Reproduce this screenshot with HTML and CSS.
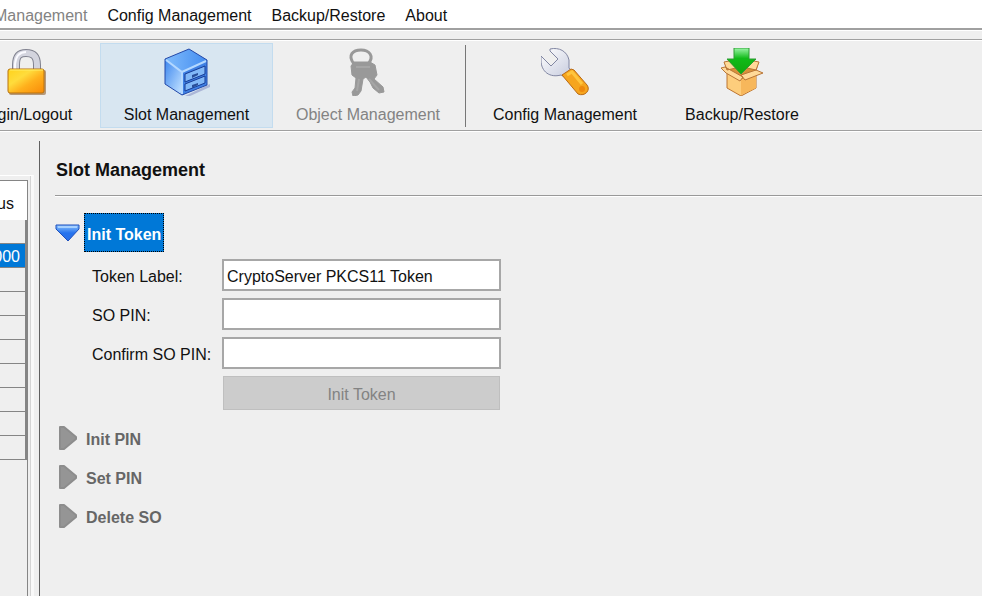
FILE: index.html
```html
<!DOCTYPE html>
<html lang="en">
  <head>
    <meta charset="UTF-8" />
    <meta name="viewport" content="width=device-width, initial-scale=1.0" />
    <title>Slot Management</title>
    <link rel="stylesheet" href="styles.css" />
  </head>
  <body>
    <nav class="menubar">
      <button class="menu" disabled>Management</button>
      <button class="menu">Config Management</button>
      <button class="menu">Backup/Restore</button>
      <button class="menu">About</button>
    </nav>

    <div class="toolbar">
      <button class="tool tool-login">
        <svg width="48" height="48" viewBox="0 0 48 48">
          <defs>
            <linearGradient id="gold" x1="0" y1="0" x2="1" y2="1">
              <stop offset="0" stop-color="#ffd21a" />
              <stop offset="0.35" stop-color="#ffdc3c" />
              <stop offset="0.6" stop-color="#ffb01c" />
              <stop offset="1" stop-color="#f98a08" />
            </linearGradient>
          </defs>
          <path d="M14 23V17C14 7 18 5 24 5S35 7 35 17V23" fill="none" stroke="#80828f" stroke-width="8" />
          <path d="M14 23V17C14 7 18 5 24 5S35 7 35 17V23" fill="none" stroke="#d3d4de" stroke-width="6" />
          <path d="M13 22V16C14 7 18 4 24 4" fill="none" stroke="#fafaff" stroke-width="2" />
          <rect x="7" y="22" width="37" height="25" rx="2" fill="#8f5f2b" opacity="0.6" />
          <rect x="6" y="21" width="36" height="24" rx="2" fill="url(#gold)" stroke="#b8730f" />
          <path d="M8 22H41" stroke="#fff06a" />
        </svg>
        <span>Login/Logout</span>
      </button>
      <button class="tool tool-slot active">
        <svg width="48" height="48" viewBox="0 0 48 48">
          <defs>
            <linearGradient id="side" x1="0" y1="0" x2="1" y2="1">
              <stop offset="0" stop-color="#3c86ee" />
              <stop offset="0.9" stop-color="#b9dcff" />
              <stop offset="1" stop-color="#5c9cf4" />
            </linearGradient>
            <linearGradient id="lid" x1="0" y1="0" x2="1" y2="0">
              <stop offset="0" stop-color="#80bcfc" />
              <stop offset="1" stop-color="#438cf0" />
            </linearGradient>
          </defs>
          <path d="M22 48L47 36V39L27 48Z" fill="#7d86bd" opacity="0.5" />
          <path d="M2 11L26 1L44 12L19 24Z" fill="url(#lid)" />
          <path d="M2 11L19 24V47L2 36Z" fill="url(#side)" />
          <path d="M19 24L44 12V37L19 47Z" fill="#3f80e3" />
          <path d="M2 11L26 1L44 12V37L19 47L2 36Z" fill="none" stroke="#2348a8" stroke-width="1" stroke-linejoin="round" />
          <path d="M3 12L19 24L43 13M19 24V46" fill="none" stroke="#b4d8ff" stroke-width="2" />
          <path d="M22 26L42 18V26L22 34ZM22 36L42 28V35L22 43Z" fill="#82b8f7" stroke="#173b95" stroke-width="1" />
          <path d="M29 27L35 25V27L29 30ZM29 37L35 35V37L29 40Z" fill="#2a4f99" />
        </svg>
        <span>Slot Management</span>
      </button>
      <button class="tool tool-object" disabled>
        <svg width="48" height="48" viewBox="0 0 48 48">
          <path d="M10 16C3 7 9 2 17 2S31 8 24 16" fill="none" stroke="#999" stroke-width="3" />
          <path d="M7 18L10 14H26L31 17L33 27L30 31L39 39L40 44L35 45L29 40L26 34L22 29L19 31L17 43L14 47L9 48L8 44L11 40L12 30L8 27Z" fill="#999" stroke="#999" stroke-linejoin="round" />
          <path d="M12 19H26M15 31L13 43M25 31L35 42" fill="none" stroke="#a6a6a6" stroke-width="2" />
        </svg>
        <span>Object Management</span>
      </button>
      <div class="separator"></div>
      <button class="tool tool-config">
        <svg width="48" height="48" viewBox="0 0 48 48">
          <defs>
            <linearGradient id="steel" x1="0" y1="0" x2="1" y2="1">
              <stop offset="0" stop-color="#fff" />
              <stop offset="1" stop-color="#c3c8dc" />
            </linearGradient>
          </defs>
          <path d="M9 1C18-1 26 3 28 12L28 20L32 25L26 30L20 27C9 30 0 24 0 12V8L10 18L17 11L9 3Z" fill="url(#steel)" stroke="#8186a2" stroke-width="1" stroke-linejoin="round" />
          <path d="M21 27L30 21L33 22L46 37C50 42 44 49 37 46Z" fill="#f6a51e" stroke="#b96a15" stroke-width="1" />
          <path d="M26 27L31 24L41 36" fill="none" stroke="#ffc53d" stroke-width="3" />
          <circle cx="41" cy="41" r="3" fill="#ee890e" />
        </svg>
        <span>Config Management</span>
      </button>
      <button class="tool tool-backup">
        <svg width="48" height="48" viewBox="0 0 48 48">
          <defs>
            <linearGradient id="arrow" x1="0" y1="0" x2="0" y2="1">
              <stop offset="0" stop-color="#9cf5a8" />
              <stop offset="0.4" stop-color="#10bb18" />
              <stop offset="1" stop-color="#12a60e" />
            </linearGradient>
          </defs>
          <path d="M9 24L23 31L38 24V40L23 48L9 40Z" fill="#fdcd7c" stroke="#bc7430" stroke-width="1" />
          <path d="M23 32L38 25V40L23 47Z" fill="#f7b75b" />
          <path d="M7 15L23 9L40 15L38 23L23 30L9 24Z" fill="#d9923b" stroke="#bc7430" stroke-width="1" />
          <path d="M7 19L3 20L8 25L22 33L25 29L7 19ZM38 22L45 25L27 32L23 27ZM6 14L11 13L18 20L9 22ZM41 14L36 13L29 20L38 22Z" fill="#ffd998" stroke="#b87537" stroke-width="1" stroke-linejoin="round" />
          <path d="M16 0H31V11H38L23 26L9 11H16Z" fill="url(#arrow)" stroke="#2c9d32" stroke-width="1" />
        </svg>
        <span>Backup/Restore</span>
      </button>
    </div>

    <main class="content">
      <section class="slots">
        <div class="scroll">
          <table>
            <thead>
              <tr><th>Status</th></tr>
            </thead>
            <tbody>
              <tr><td></td></tr>
              <tr class="selected"><td>0000</td></tr>
              <tr><td></td></tr>
              <tr><td></td></tr>
              <tr><td></td></tr>
              <tr><td></td></tr>
              <tr><td></td></tr>
              <tr><td></td></tr>
              <tr><td></td></tr>
              <tr><td></td></tr>
            </tbody>
          </table>
        </div>
      </section>

      <section class="panel">
        <h1>Slot Management</h1>

        <button class="section open">
          <svg width="26" height="20" viewBox="0 0 26 20">
            <defs>
              <linearGradient id="blue" x1="0" y1="0" x2="0" y2="1">
                <stop offset="0" stop-color="#8cc4ff" />
                <stop offset="0.5" stop-color="#2673ed" />
                <stop offset="1" stop-color="#2a6fe8" />
              </linearGradient>
            </defs>
            <path d="M1 2H24V6L13 18L1 6Z" fill="url(#blue)" stroke="#1d4fbd" stroke-width="1" stroke-linejoin="round" />
            <path d="M3 4H22" stroke="#a5d0ff" stroke-width="2" />
          </svg>
          <span>Init Token</span>
        </button>

        <form class="token-form" onsubmit="return false">
          <label for="tokenLabel">Token Label:</label>
          <input type="text" id="tokenLabel" value="CryptoServer PKCS11 Token" />
          <label for="soPin">SO PIN:</label>
          <input type="password" id="soPin" />
          <label for="confirmPin">Confirm SO PIN:</label>
          <input type="password" id="confirmPin" />
          <button type="submit" class="submit" disabled>Init Token</button>
        </form>

        <button class="section" disabled>
          <svg width="26" height="26" viewBox="0 0 26 26">
            <path d="M5 2H9L21 12V14L9 24H5Z" fill="#959595" stroke="#8d8d8d" stroke-width="2" stroke-linejoin="round" />
          </svg>
          <span>Init PIN</span>
        </button>
        <button class="section" disabled>
          <svg width="26" height="26" viewBox="0 0 26 26">
            <path d="M5 2H9L21 12V14L9 24H5Z" fill="#959595" stroke="#8d8d8d" stroke-width="2" stroke-linejoin="round" />
          </svg>
          <span>Set PIN</span>
        </button>
        <button class="section" disabled>
          <svg width="26" height="26" viewBox="0 0 26 26">
            <path d="M5 2H9L21 12V14L9 24H5Z" fill="#959595" stroke="#8d8d8d" stroke-width="2" stroke-linejoin="round" />
          </svg>
          <span>Delete SO</span>
        </button>
      </section>
    </main>
  </body>
</html>
```

FILE: styles.css
```css
* {
  box-sizing: border-box;
}
body {
  margin: 0;
  min-height: 100vh;
  display: flex;
  flex-direction: column;
  overflow: hidden;
  background: #efefef;
  color: #111;
  font-family: "Liberation Sans", Arial, sans-serif;
  font-size: 16px;
  line-height: 20px;
}
button {
  padding: 0;
  border: none;
  background: none;
  color: inherit;
  font: inherit;
  white-space: nowrap;
}
button:disabled {
  color: #838383;
}

/* menu */
.menubar {
  display: flex;
  gap: 20px;
  height: 30px;
  margin-left: -6px;
  padding-top: 3px;
  background: white;
  border-bottom: 2px solid #a0a0a0;
}

/* toolbar */
.toolbar {
  display: flex;
  margin-top: 9px;
  padding: 3px 0 2px;
  border-top: 1px solid #a0a0a0;
  border-bottom: 1px solid #a0a0a0;
  box-shadow: inset 0 1px white, 0 1px white, 0 -8px #efefef, 0 -9px white;
}
.tool {
  display: flex;
  flex-direction: column;
  align-items: center;
  gap: 9px;
  height: 85px;
  padding-top: 4px;
  border: 1px solid transparent;
  flex-shrink: 0;
}
.tool-login {
  width: 148px;
  margin-left: -48px;
}
.tool-slot {
  width: 173px;
}
.tool-object {
  width: 190px;
}
.tool-config {
  width: 198px;
}
.tool-backup {
  width: 156px;
}
.tool.active {
  background: #d8e6f1;
  border-color: #c3dcef;
}
.separator {
  width: 1px;
  margin: 2px 0 1px 2px;
  background: #777;
}

/* content */
.content {
  display: flex;
  flex: 1;
}
.slots {
  display: flex;
  width: 34px;
  margin-top: 44px;
  padding: 4px 2px 0 0;
  border-top: 1px solid white;
  border-right: 3px solid #f9f9f9;
  box-shadow: inset -1px 0 #d4d4d4;
}
.scroll {
  display: flex;
  justify-content: flex-end;
  width: 28px;
  border-top: 1px solid #858585;
  border-right: 1px solid #858585;
}
.slots table {
  width: 148px;
  flex-shrink: 0;
  align-self: flex-start;
  border-collapse: separate;
  border-spacing: 0;
}
.slots th {
  height: 39px;
  padding: 6px 13px 0 0;
  background: white;
  font-weight: normal;
  text-align: right;
}
.slots td {
  height: 24px;
  padding: 2px 5px 0 0;
  border-right: 2px solid #858585;
  border-bottom: 1px solid #858585;
  text-align: right;
}
.slots .selected td {
  background: #0078d7;
  color: white;
}
.panel {
  flex: 1;
  margin: 10px 0 0 5px;
  padding-left: 15px;
  border-left: 1px solid #606060;
}
h1 {
  margin: 0 0 17px;
  padding: 19px 1px 14px;
  border-bottom: 1px solid #999;
  box-shadow: 0 1px white;
  font-size: 18px;
  line-height: 21px;
}
.section {
  display: flex;
  align-items: center;
  gap: 3px;
  height: 39px;
  font-weight: bold;
}
.section:disabled {
  color: #666;
}
.section span {
  padding: 4px 2px 0;
}
.section.open span {
  padding: 11px 2px 6px;
  border: 1px dotted black;
  background: #0078d7;
  color: white;
}
.token-form {
  display: grid;
  grid-template-columns: 130px 279px;
  gap: 7px 0;
  margin: 7px 0 8px 37px;
  align-items: center;
}
.token-form label {
  padding-top: 3px;
}
.token-form input {
  height: 32px;
  padding: 3px 3px 0;
  border: 2px solid #a7a7a7;
  background: white;
  color: #111;
  font: inherit;
}
.submit {
  grid-column: 2;
  height: 34px;
  margin: 0 1px;
  padding-top: 3px;
  border: 1px solid #bfbfbf;
  background: #ccc;
}
```
